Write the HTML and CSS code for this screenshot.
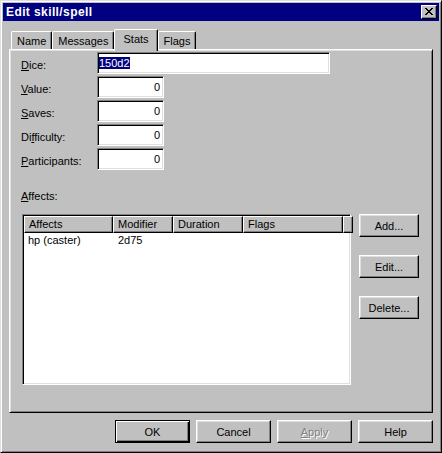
FILE: index.html
```html
<!DOCTYPE html>
<html lang="en">
<head>
  <meta charset="UTF-8">
  <meta name="viewport" content="width=device-width, initial-scale=1.0">
  <title>Edit skill/spell</title>
  <link rel="stylesheet" href="styles.css">
</head>
<body>
  <div class="window">
    <!-- Barra de título -->
    <div class="title-bar">
      <span class="title-text">Edit skill/spell</span>
      <div class="close-button">
        <svg width="8" height="7" viewBox="0 0 8 7" shape-rendering="crispEdges">
          <path d="M0 0h2v1h-2z M6 0h2v1h-2z M1 1h2v1h-2z M5 1h2v1h-2z M2 2h4v1h-4z M3 3h2v1h-2z M2 4h4v1h-4z M1 5h2v1h-2z M5 5h2v1h-2z M0 6h2v1h-2z M6 6h2v1h-2z" fill="#000"/>
        </svg>
      </div>
    </div>

    <!-- Pestañas -->
    <div class="tabs">
      <div class="tab">Name</div>
      <div class="tab">Messages</div>
      <div class="tab active">Stats</div>
      <div class="tab">Flags</div>
    </div>

    <div class="tab-panel">
      <div class="form">
        <div class="form-row">
          <span class="label"><u>D</u>ice:</span>
          <div class="field field-wide"><span class="selected">150d2</span></div>
        </div>
        <div class="form-row">
          <span class="label"><u>V</u>alue:</span>
          <div class="field field-number">0</div>
        </div>
        <div class="form-row">
          <span class="label"><u>S</u>aves:</span>
          <div class="field field-number">0</div>
        </div>
        <div class="form-row">
          <span class="label">Di<u>f</u>ficulty:</span>
          <div class="field field-number">0</div>
        </div>
        <div class="form-row">
          <span class="label"><u>P</u>articipants:</span>
          <div class="field field-number">0</div>
        </div>
      </div>

      <p class="section-label"><u>A</u>ffects:</p>

      <div class="affects-area">
        <!-- Lista de efectos -->
        <div class="list-view">
          <div class="list-header">
            <div class="header-cell">Affects</div>
            <div class="header-cell">Modifier</div>
            <div class="header-cell">Duration</div>
            <div class="header-cell">Flags</div>
            <div class="header-cell"></div>
          </div>
          <div class="list-row">
            <div class="list-cell">hp (caster)</div>
            <div class="list-cell">2d75</div>
            <div class="list-cell"></div>
            <div class="list-cell"></div>
          </div>
        </div>

        <div class="side-buttons">
          <div class="button side-button">Add...</div>
          <div class="button side-button">Edit...</div>
          <div class="button side-button">Delete...</div>
        </div>
      </div>
    </div>

    <!-- Botones inferiores -->
    <div class="footer">
      <div class="button footer-button default">OK</div>
      <div class="button footer-button">Cancel</div>
      <div class="button footer-button disabled"><u>A</u>pply</div>
      <div class="button footer-button">Help</div>
    </div>
  </div>
</body>
</html>
```

FILE: styles.css
```css
/* Estilos generales */
body {
  margin: 0;
  padding: 0;
  font-family: "Liberation Sans", Arial, sans-serif;
  font-size: 11px;
  color: #000;
  background-color: #c0c0c0;
}

/* Ventana */
.window {
  width: 442px;
  height: 453px;
  box-sizing: border-box;
  padding: 2px;
  background-color: #c0c0c0;
  border: 1px solid;
  border-color: #dfdfdf #000 #000 #dfdfdf;
  box-shadow: inset 1px 1px #fff, inset -1px -1px #808080;
  display: flex;
  flex-direction: column;
}

/* Barra de título */
.title-bar {
  height: 18px;
  background-color: #000080;
  display: flex;
  align-items: center;
  justify-content: space-between;
  padding: 0 2px 0 3px;
}

.title-text {
  color: #fff;
  font-weight: bold;
  font-size: 12px;
  letter-spacing: 0.4px;
  line-height: 18px;
}

.close-button {
  width: 16px;
  height: 14px;
  box-sizing: border-box;
  background-color: #c0c0c0;
  border: 1px solid;
  border-color: #fff #000 #000 #fff;
  box-shadow: inset -1px -1px #808080;
  display: flex;
  align-items: center;
  justify-content: center;
  padding: 0 1px 1px 0;
}

.close-button svg {
  display: block;
}

/* Pestañas */
.tabs {
  display: flex;
  align-items: flex-end;
  height: 20px;
  margin: 8px 0 0 8px;
}

.tab {
  box-sizing: border-box;
  height: 18px;
  padding: 3px 5px 0;
  line-height: 13px;
  border: 1px solid;
  border-bottom: none;
  border-color: #fff #000 #000 #fff;
  border-radius: 2px 2px 0 0;
  box-shadow: inset -1px 0 #808080;
  background-color: #c0c0c0;
  white-space: nowrap;
}

.tab.active {
  height: 22px;
  margin-bottom: -2px;
  padding: 3px 8px 0;
  position: relative;
  z-index: 1;
}

/* Panel de la pestaña */
.tab-panel {
  height: 364px;
  box-sizing: border-box;
  margin: 0 6px;
  padding: 2px 11px;
  border: 1px solid;
  border-color: #fff #000 #000 #fff;
  box-shadow: inset 1px 1px #dfdfdf, inset -1px -1px #808080;
}

.form {
  display: flex;
  flex-direction: column;
  gap: 2px;
}

.form-row {
  display: flex;
  height: 22px;
}

.label {
  width: 76px;
  padding-top: 7px;
  line-height: 13px;
}

/* Campos de texto */
.field {
  box-sizing: border-box;
  height: 22px;
  line-height: 20px;
  background-color: #fff;
  border: 1px solid;
  border-color: #808080 #fff #fff #808080;
  box-shadow: inset 1px 1px #000, inset -1px -1px #dfdfdf;
  white-space: nowrap;
}

.field-wide {
  width: 233px;
  padding: 0 1px;
}

.field-number {
  width: 67px;
  padding: 0 3px;
  text-align: right;
}

.selected {
  background-color: #000080;
  color: #fff;
}

.section-label {
  margin: 20px 0 11px;
  line-height: 13px;
}

/* Lista de efectos */
.affects-area {
  display: flex;
  align-items: flex-start;
  gap: 8px;
  margin-left: 1px;
}

.list-view {
  width: 329px;
  height: 171px;
  box-sizing: border-box;
  padding: 1px;
  background-color: #fff;
  border: 1px solid;
  border-color: #808080 #fff #fff #808080;
  box-shadow: inset 1px 1px #000, inset -1px -1px #dfdfdf;
}

.list-header,
.list-row {
  display: grid;
  grid-template-columns: 89px 60px 70px 100px 1fr;
}

.header-cell {
  box-sizing: border-box;
  height: 17px;
  padding: 1px 4px 0;
  line-height: 13px;
  background-color: #c0c0c0;
  border: 1px solid;
  border-color: #fff #000 #000 #fff;
  box-shadow: inset -1px -1px #808080;
  white-space: nowrap;
  overflow: hidden;
}

.list-cell {
  padding: 1px 5px 0;
  line-height: 13px;
  white-space: nowrap;
}

.list-cell:first-child {
  padding-left: 4px;
}

/* Botones */
.button {
  box-sizing: border-box;
  height: 23px;
  background-color: #c0c0c0;
  border: 1px solid;
  border-color: #fff #000 #000 #fff;
  box-shadow: inset -1px -1px #808080, inset 1px 1px #dfdfdf;
  display: flex;
  align-items: center;
  justify-content: center;
  cursor: pointer;
}

.side-buttons {
  display: flex;
  flex-direction: column;
  gap: 18px;
}

.side-button {
  width: 60px;
}

.footer {
  display: flex;
  justify-content: flex-end;
  gap: 6px;
  margin: 7px 6px 0;
}

.footer-button {
  width: 75px;
}

.button.default {
  border-color: #000;
  box-shadow: inset 1px 1px #fff, inset -1px -1px #000, inset -2px -2px #808080;
}

.button.disabled {
  color: #808080;
  text-shadow: 1px 1px #fff;
  cursor: default;
}
```
